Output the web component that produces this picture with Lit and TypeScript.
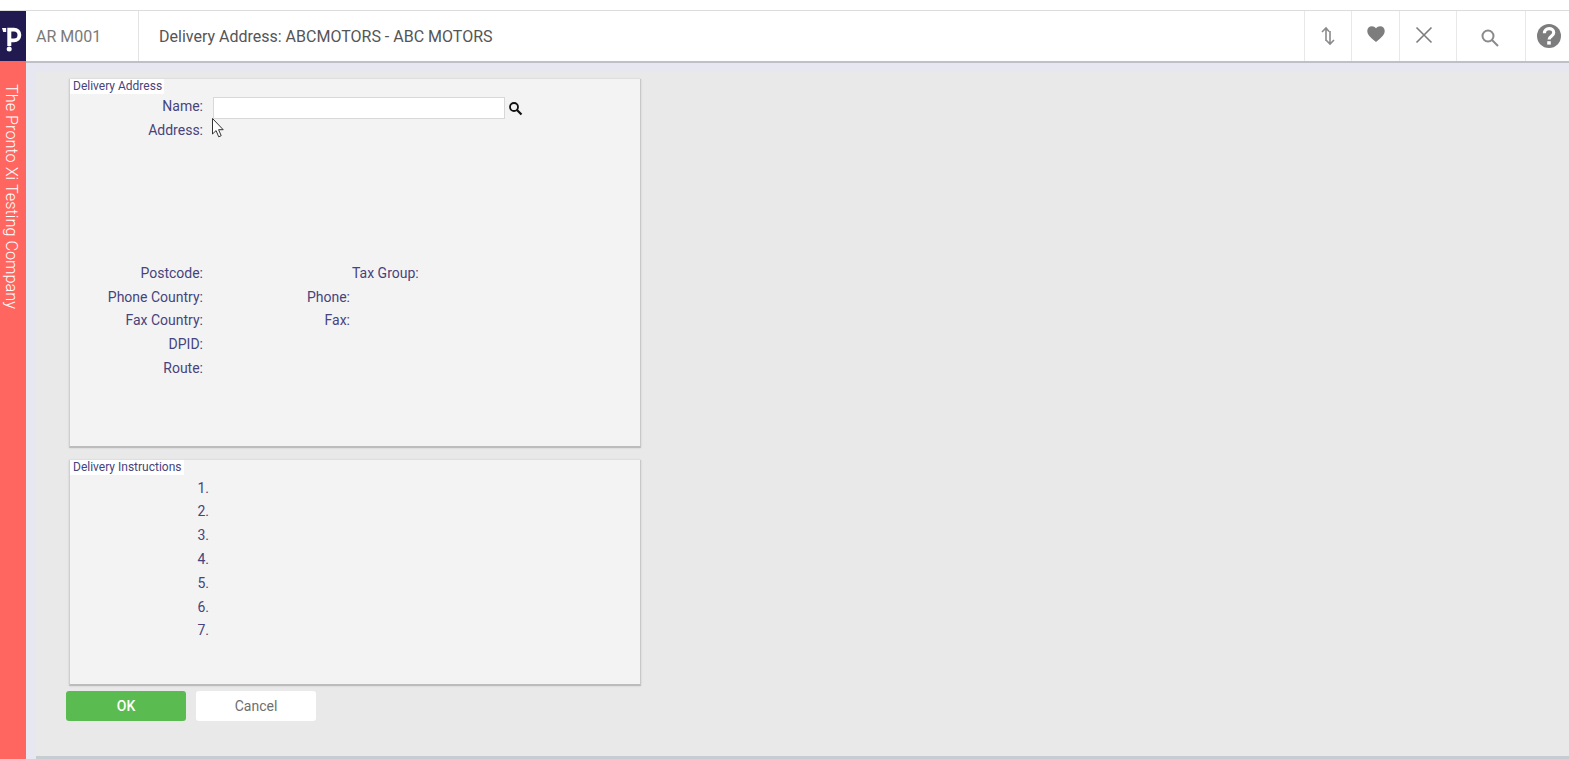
import { LitElement, html, css } from "lit";
import { customElement } from "lit/decorators.js";

@customElement("app-root")
export class AppRoot extends LitElement {
  static styles = css`
    :host { display: block; height: 759px; width: 1569px; overflow: hidden; position: relative; background: #fff;
      font-family: Roboto, "Liberation Sans", sans-serif; color: #47437c; }
    .app { display: flex; flex-direction: column; height: 100%; }
    .top { height: 10px; background: #fff; border-bottom: 1px solid #dcdcdc; flex: none; }
    .shell { flex: 1; display: flex; min-height: 0; }
    .rail { width: 26px; flex: none; display: flex; flex-direction: column; }
    .logo { height: 50px; background: #201a50; flex: none; }
    .logo svg { display: block; }
    .side { flex: 1; background: #ff6660; color: #fff; font-weight: 300; font-size: 16.3px; writing-mode: vertical-rl; padding: 23px 5px 0 0; box-sizing: border-box; line-height: 20px; white-space: nowrap; }
    .right { flex: 1; display: flex; flex-direction: column; min-width: 0; }
    .header { height: 50px; flex: none; display: flex; align-items: stretch; background: #fff; border-bottom: 2px solid #bfbfc6; }
    .code { width: 113px; box-sizing: border-box; padding-left: 10px; font-size: 16px; color: #7a7a7a; display: flex; align-items: center; border-right: 1px solid #e4e4e4; flex: none; }
    .title { flex: 1; padding-left: 20px; font-size: 16px; color: #555; display: flex; align-items: center; }
    .hbtn { display: flex; align-items: center; justify-content: center; border-left: 1px solid #e8e8e8; box-sizing: border-box; flex: none; }
    .hbtn svg { display: block; }
    .body { flex: 1; display: flex; min-height: 0; background: #e7e7f1; padding: 9px 0 0 10px; }
    .main { flex: 1; background: #e9e9e9; display: flex; flex-direction: column; min-width: 0; }
    .content { flex: 1; padding: 7px 0 0 33px; display: flex; flex-direction: column; align-items: flex-start; }
    .card { width: 572px; box-sizing: border-box; background: #f3f3f3; border-left: 1px solid #cfcfcf; border-right: 1px solid #c8c8c8; border-bottom: 2px solid #bcbcbc; box-shadow: 0 0 2px rgba(0,0,0,.12); margin-bottom: 12px; display: flex; flex-direction: column; }
    .c1 { height: 369px; }
    .c2 { height: 226px; margin-bottom: 5px; }
    .legend { align-self: flex-start; background: #fff; font-size: 12px; line-height: 15px; padding: 0 2px 0 3px; }
    .c2 .legend { padding-right: 3px; }
    .rows { display: grid; grid-auto-rows: 23.8px; font-size: 14px; line-height: 23.8px; }
    .c1 .rows { grid-template-columns: 133px 10px 137px 16px 1fr; margin-top: 1.2px; }
    .c2 .rows { grid-template-columns: 139px; margin-top: 1.6px; }
    .lbl { text-align: right; white-space: nowrap; }
    .input { grid-column: 3 / 6; display: flex; align-items: center; gap: 3px; }
    .input input { width: 292px; height: 22px; box-sizing: border-box; border: 1px solid #d8d8d8; background: #fff; padding: 0; margin: 2px 0 0; outline: none; flex: none; }
    .input svg { margin-top: 2px; }
    .tax { grid-column: 3 / 6; padding-left: 139px; white-space: nowrap; }
    .blank { grid-column: 1 / -1; }
    .rest { grid-column: 2 / -1; }
    .c3 { grid-column: 3; }
    .buttons { display: flex; gap: 10px; margin-left: -3px; }
    .btn { width: 120px; height: 30px; border-radius: 3px; display: flex; align-items: center; justify-content: center; font-size: 14px; line-height: 28px; }
    .ok { background: #5abc50; color: #fff; font-weight: 500; }
    .cancel { background: #fff; color: #6e6e6e; }
    .foot { height: 3px; background: #c6cdd2; flex: none; }
    .cursor { position: absolute; left: 212px; top: 118px; }
  `;

  render() {
    const lines = [1, 2, 3, 4, 5, 6, 7];
    return html`<div class="app">
      <div class="top"></div>
      <div class="shell">
        <div class="rail">
          <div class="logo">
            <svg width="26" height="50" viewBox="0 11 26 50">
              <path fill="#fff" d="M2 28h4.200v4H3.200z"/>
              <path fill="#fff" fill-rule="evenodd" d="M7.300 27.700H14a7.200 7.200 0 0 1 0 14.600h-2.700V46H7.300zM11.300 31.500V38.500H14a3.500 3.500 0 0 0 0-7z"/>
              <circle fill="#fff" cx="9.200" cy="49" r="2.500"/>
            </svg>
          </div>
          <div class="side">The Pronto Xi Testing Company</div>
        </div>
        <div class="right">
          <div class="header">
            <div class="code">AR M001</div>
            <div class="title">Delivery Address: ABCMOTORS - ABC MOTORS</div>
            <div class="hbtn" style="width:47px">
              <svg width="18" height="20" viewBox="0 0 18 20" fill="none" stroke="#8a8a8a" stroke-width="1.6" style="margin-top:-1px">
                <path d="M7 15V2M3 6l4-4 3 3.500M11 5v13M7.500 14.500l3.500 3.500 4-4"/>
              </svg>
            </div>
            <div class="hbtn" style="width:48px">
              <svg width="18" height="16" viewBox="0 0 18 16" style="margin-top:-4px">
                <path fill="#7d7d7d" d="M9 16C3 11 .3 8.400.3 4.900.3 2.200 2.300.2 4.900.2 6.500.2 8 1 9 2.300 10 1 11.500.2 13.100.2c2.600 0 4.600 2 4.600 4.700C17.700 8.400 15 11 9 16z"/>
              </svg>
            </div>
            <div class="hbtn" style="width:57px">
              <svg width="18" height="18" viewBox="0 0 18 18" style="margin:-3px 9px 0 0" fill="none" stroke="#7d7d7d" stroke-width="1.600">
                <path d="M1.500 1.500l15 15M16.500 1.500l-15 15"/>
              </svg>
            </div>
            <div class="hbtn" style="width:69px">
              <svg width="18" height="18" viewBox="0 0 18 18" style="margin:3px 3px 0 0" fill="none" stroke="#8a8a8a" stroke-width="2">
                <circle cx="7" cy="7" r="5.500"/><path d="M11 11l6 6"/>
              </svg>
            </div>
            <div class="hbtn" style="width:44px">
              <svg width="24" height="24" viewBox="0 0 24 24" style="margin:-1px 0 0 2px">
                <circle cx="12" cy="12" r="12" fill="#7d7d7d"/>
                <path fill="none" stroke="#fff" stroke-width="3.200" d="M7.400 9.300c0-3 2.100-4.600 4.700-4.600s4.600 1.600 4.600 4c0 3.500-4.600 3.500-4.600 6.800"/>
                <rect x="10.200" y="17.200" width="3.600" height="3.400" fill="#fff"/>
              </svg>
            </div>
          </div>
          <div class="body">
            <div class="main">
              <div class="content">
                <div class="card c1">
                  <div class="legend">Delivery Address</div>
                  <div class="rows">
                    <div class="lbl">Name:</div><div></div>
                    <div class="input">
                      <input type="text" />
                      <svg width="15" height="15" viewBox="0 0 15 15" fill="none" stroke="#111" stroke-width="1.800">
                        <circle cx="6" cy="6" r="4"/><path d="M9 9l4.500 4.500" stroke-width="2.200"/>
                      </svg>
                    </div>
                    <div class="lbl">Address:</div>
                    <div class="rest"></div>
                    <div class="blank"></div>
                    <div class="blank"></div>
                    <div class="blank"></div>
                    <div class="blank"></div>
                    <div class="blank"></div>
                    <div class="lbl">Postcode:</div><div></div>
                    <div class="tax">Tax Group:</div>
                    <div class="lbl">Phone Country:</div><div></div>
                    <div class="lbl c3">Phone:</div><div></div><div></div>
                    <div class="lbl">Fax Country:</div><div></div>
                    <div class="lbl c3">Fax:</div><div></div><div></div>
                    <div class="lbl">DPID:</div><div class="rest"></div>
                    <div class="lbl">Route:</div><div class="rest"></div>
                  </div>
                </div>
                <div class="card c2">
                  <div class="legend">Delivery Instructions</div>
                  <div class="rows">${lines.map((n) => html`<div class="lbl">${n}.</div>`)}</div>
                </div>
                <div class="buttons">
                  <div class="btn ok">OK</div>
                  <div class="btn cancel">Cancel</div>
                </div>
              </div>
              <div class="foot"></div>
            </div>
          </div>
        </div>
      </div>
    </div>
    <svg class="cursor" width="13" height="20" viewBox="0 0 13 20">
      <path d="M.5.500V16l3.600-3.400 2.600 6.200 2.500-1.100-2.600-6h4.600z" fill="#fff" stroke="#333" stroke-width="1"/>
    </svg>`;
  }
}
